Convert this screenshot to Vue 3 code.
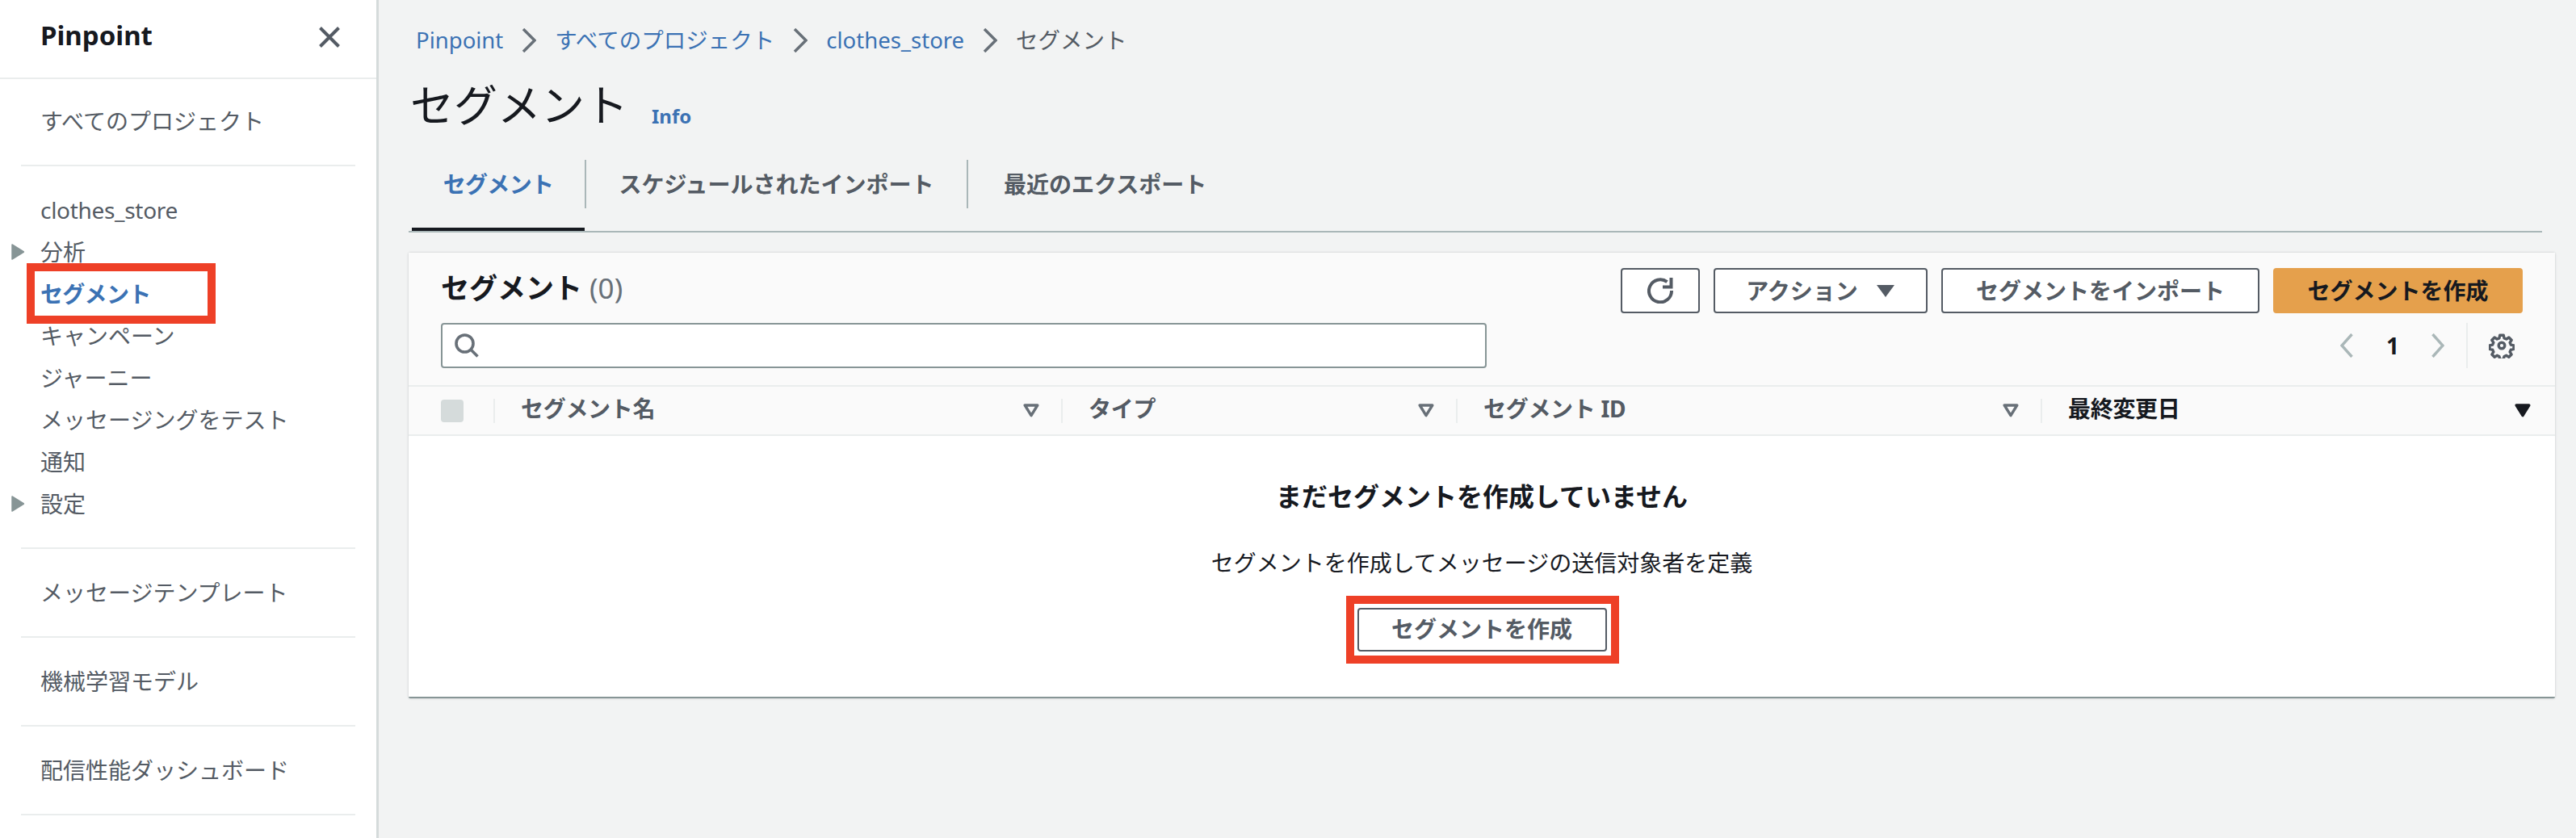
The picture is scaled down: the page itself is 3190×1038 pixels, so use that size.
<script setup>
const topLink = 'すべてのプロジェクト'
const projectRows = [
  { label: 'clothes_store', latin: true },
  { label: '分析', caret: true },
  { label: 'セグメント', active: true },
  { label: 'キャンペーン' },
  { label: 'ジャーニー' },
  { label: 'メッセージングをテスト' },
  { label: '通知' },
  { label: '設定', caret: true },
]
const extraLinks = ['メッセージテンプレート', '機械学習モデル', '配信性能ダッシュボード']
const crumbs = ['Pinpoint', 'すべてのプロジェクト', 'clothes_store']
const tabs = ['セグメント', 'スケジュールされたインポート', '最近のエクスポート']
const columns = [
  { label: 'セグメント名' },
  { label: 'タイプ' },
  { label: 'セグメント ID' },
  { label: '最終変更日', sorted: true },
]
</script>

<template>
  <div class="page">
    <aside class="sidebar">
      <div class="side-head">
        <span class="side-title">Pinpoint</span>
        <svg class="close" width="26" height="26" viewBox="0 0 26 26" fill="none" stroke="#545b64" stroke-width="4">
          <path d="M1.5 1.5 24.5 24.5M24.5 1.5 1.5 24.5" />
        </svg>
      </div>
      <div class="side-section first">
        <div class="nav-row">{{ topLink }}</div>
      </div>
      <div class="side-rule"></div>
      <div class="side-section">
        <div
          v-for="row in projectRows"
          :key="row.label"
          class="nav-row"
          :class="{ active: row.active, 'has-caret': row.caret, latin: row.latin }"
        >
          <svg v-if="row.caret" class="caret" width="16" height="20" viewBox="0 0 16 20">
            <path d="M1 1 15.5 10 1 19Z" fill="#879596" stroke="#879596" stroke-width="1.5" stroke-linejoin="round" />
          </svg>
          {{ row.label }}
          <span v-if="row.active" class="mark mark-nav"></span>
        </div>
      </div>
      <template v-for="link in extraLinks" :key="link">
        <div class="side-rule"></div>
        <div class="side-section">
          <div class="nav-row">{{ link }}</div>
        </div>
      </template>
      <div class="side-rule"></div>
    </aside>

    <main class="main">
      <nav class="crumbs">
        <template v-for="crumb in crumbs" :key="crumb">
          <a class="crumb-link">{{ crumb }}</a>
          <svg class="crumb-sep" width="18" height="30" viewBox="0 0 18 30" fill="none" stroke="#687078" stroke-width="3.5">
            <path d="M2 1 16 15 2 29" />
          </svg>
        </template>
        <span class="crumb-current">セグメント</span>
      </nav>

      <div class="title-row">
        <h1 class="page-title">セグメント</h1>
        <a class="info">Info</a>
      </div>

      <div class="tabs">
        <div v-for="(tab, i) in tabs" :key="tab" class="tab" :class="['tab-' + i, { on: i === 0 }]">
          <span class="tab-text">{{ tab }}</span>
        </div>
      </div>

      <section class="card">
        <header class="card-head">
          <div class="head-row">
            <h2 class="card-title">セグメント <span class="count">(0)</span></h2>
            <div class="actions">
              <button class="btn btn-refresh" aria-label="refresh">
                <svg width="32" height="32" viewBox="0 0 32 32" fill="none" stroke="#545b64" stroke-width="4">
                  <path d="M24.5 5.2A14 14 0 1 0 30 16" />
                  <path d="M29.5 0V11.5H19" />
                </svg>
              </button>
              <button class="btn btn-action">アクション
                <svg class="btn-caret" width="24" height="17" viewBox="0 0 24 17"><path d="M1 1H23L12 16Z" fill="#545b64" /></svg>
              </button>
              <button class="btn btn-import">セグメントをインポート</button>
              <button class="btn btn-primary">セグメントを作成</button>
            </div>
          </div>
          <div class="head-row second">
            <div class="search">
              <svg width="30" height="30" viewBox="0 0 30 30" fill="none" stroke="#687078" stroke-width="3.6">
                <circle cx="12.5" cy="12.5" r="10.5" />
                <path d="M20 20 28.5 28.5" />
              </svg>
            </div>
            <div class="pager">
              <svg width="16" height="30" viewBox="0 0 16 30" fill="none" stroke="#aab7b8" stroke-width="3.4">
                <path d="M14.5 1 2 15 14.5 29" />
              </svg>
              <span class="page-num">1</span>
              <svg width="16" height="30" viewBox="0 0 16 30" fill="none" stroke="#aab7b8" stroke-width="3.4">
                <path d="M1.5 1 14 15 1.5 29" />
              </svg>
              <div class="pager-rule"></div>
              <svg class="gear" width="32" height="32" viewBox="0 0 32 32" fill="none" stroke="#545b64" stroke-width="3.8" stroke-linejoin="round">
                <path d="M13.5 1.8h5l.9 4 3 1.3 3.5-2.2 3.6 3.6-2.2 3.5 1.3 3 4 .9v5l-4 .9-1.3 3 2.2 3.5-3.6 3.6-3.5-2.2-3 1.3-.9 4h-5l-.9-4-3-1.3-3.5 2.2-3.6-3.6 2.2-3.5-1.3-3-4-.9v-5l4-.9 1.3-3-2.2-3.5 3.6-3.6 3.5 2.2 3-1.3z" transform="translate(1.6 1.6) scale(.9)" />
                <circle cx="16" cy="16" r="3.8" stroke-width="3.4" />
              </svg>
            </div>
          </div>
        </header>

        <div class="col-row">
          <div class="col-check"><span class="checkbox"></span></div>
          <div v-for="col in columns" :key="col.label" class="col" :class="{ sorted: col.sorted }">
            <span class="col-text">{{ col.label }}</span>
            <svg width="20" height="17" viewBox="0 0 20 17">
              <path
                d="M2.2 2H17.8L10 14.6Z"
                :fill="col.sorted ? '#16191f' : 'none'"
                :stroke="col.sorted ? '#16191f' : '#687078'"
                stroke-width="3.4"
                stroke-linejoin="round"
              />
            </svg>
          </div>
        </div>

        <div class="empty">
          <div class="empty-title">まだセグメントを作成していません</div>
          <div class="empty-sub">セグメントを作成してメッセージの送信対象者を定義</div>
          <div class="empty-btn-wrap">
            <button class="btn btn-empty">セグメントを作成</button>
            <span class="mark mark-btn"></span>
          </div>
        </div>
      </section>
    </main>
  </div>
</template>

<style>
html, body { margin: 0; background: #f2f3f3; }
</style>

<style scoped>
.page {
  display: flex;
  width: 3190px;
  height: 1038px;
  overflow: hidden;
  background: #f2f3f3;
  font-family: "Noto Sans", "Noto Sans CJK JP", sans-serif;
  font-size: 28px;
  color: #16191f;
}
.sidebar {
  flex: 0 0 466px;
  background: #fff;
  border-right: 3px solid #d5dbdb;
}
.side-head {
  display: flex;
  align-items: center;
  justify-content: space-between;
  height: 96px;
  padding: 0 45px 0 50px;
  border-bottom: 2px solid #eaeded;
}
.side-title { font-size: 33px; font-weight: 700; line-height: 40px; margin-bottom: 8px; }
.close { margin-bottom: 4px; }
.side-section { padding: 28px 0; }
.side-section.first { padding: 26px 0 28px; }
.side-rule { height: 2px; margin: 0 26px; background: #eaeded; }
.nav-row {
  position: relative;
  display: flex;
  align-items: center;
  height: 52px;
  padding-left: 50px;
  color: #545b64;
  line-height: 52px;
  white-space: nowrap;
}
.nav-row.latin { letter-spacing: -0.3px; }
.nav-row.has-caret { padding-left: 14px; }
.nav-row.active { color: #3b72b4; font-weight: 700; letter-spacing: -0.7px; }
.caret { margin-right: 20px; }
.mark { position: absolute; border: 10px solid #ee4027; box-sizing: border-box; }
.mark-nav { left: 33px; width: 234px; top: -12px; height: 75px; }

.main {
  flex: 1;
  min-width: 0;
  padding: 30px 26px 0 36px;
}
.crumbs { display: flex; align-items: center; height: 40px; gap: 23px; padding-left: 10px; white-space: nowrap; font-size: 27.5px; }
.crumb-link { color: #3b72b4; line-height: 40px; }
.crumb-current { color: #545b64; line-height: 40px; }
.title-row { display: flex; align-items: flex-end; height: 60px; margin-top: 30px; padding-left: 3px; }
.page-title { margin: 0; font-size: 54px; font-weight: 400; line-height: 60px; }
.info { margin: 0 0 0 29px; color: #3b72b4; font-size: 24px; font-weight: 700; line-height: 32px; }

.tabs {
  display: flex;
  margin: 22px 16px 0 1px;
  padding: 16px 0 0 4px;
  height: 88px;
  border-bottom: 2px solid #aab7b8;
}
.tab {
  position: relative;
  display: flex;
  align-items: center;
  justify-content: center;
  box-sizing: border-box;
  height: 60px;
  color: #545b64;
  font-weight: 700;
  white-space: nowrap;
  line-height: 60px;
}
.tab-0 { width: 216px; border-right: 2px solid #aab7b8; }
.tab-1 { width: 473px; border-right: 2px solid #aab7b8; }
.tab-2 { padding-left: 44px; }
.tab.on { color: #3b72b4; letter-spacing: -0.7px; }
.tab.on::after {
  content: "";
  position: absolute;
  left: 0;
  right: 0;
  bottom: -28px;
  height: 4px;
  background: #16191f;
}

.card {
  margin-top: 25px;
  margin-left: 1px;
  height: 552px;
  box-sizing: border-box;
  background: #fff;
  border-radius: 2px;
  border-bottom: 2px solid #879596;
  box-shadow: 0 0 3px rgba(0, 28, 36, 0.22);
}
.card-head { padding: 19px 40px 21px 40px; background: #fafafa; }
.head-row { display: flex; align-items: center; justify-content: space-between; height: 56px; }
.head-row.second { margin-top: 12px; }
.card-title { margin: 0 0 6px 0; font-size: 35px; font-weight: 700; line-height: 44px; white-space: nowrap; }
.count { color: #687078; font-weight: 400; }
.actions { display: flex; gap: 17px; }
.btn {
  display: flex;
  align-items: center;
  justify-content: center;
  box-sizing: border-box;
  height: 56px;
  margin: 0;
  padding: 0;
  border: 2px solid #545b64;
  border-radius: 4px;
  background: #fff;
  color: #545b64;
  font: 700 28px/1 "Noto Sans", "Noto Sans CJK JP", sans-serif;
  white-space: nowrap;
}
.btn-refresh { width: 98px; }
.btn-action { width: 265px; }
.btn-caret { margin-left: 22px; }
.btn-import { width: 394px; }
.btn-primary { width: 309px; background: #e5a04c; border-color: #e5a04c; color: #16191f; }
.search {
  display: flex;
  align-items: center;
  box-sizing: border-box;
  width: 1295px;
  height: 56px;
  padding-left: 15px;
  background: #fff;
  border: 2px solid #879596;
  border-radius: 4px;
}
.pager { display: flex; align-items: center; height: 56px; padding-right: 10px; }
.page-num { width: 30px; margin: 0 33px 0 34px; text-align: center; font-weight: 700; line-height: 40px; font-size: 28px; }
.pager-rule { width: 2px; height: 56px; margin: 0 26px 0 27px; background: #eaeded; }
.gear { display: block; }

.col-row {
  display: grid;
  grid-template-columns: 107px 703px 489px 724px 1fr;
  align-items: center;
  box-sizing: border-box;
  height: 63px;
  background: #fafafa;
  border-top: 2px solid #eaeded;
  border-bottom: 2px solid #eaeded;
}
.col-check {
  display: flex;
  align-items: center;
  box-sizing: border-box;
  height: 30px;
  padding-left: 40px;
  border-right: 2px solid #eaeded;
}
.checkbox { width: 28px; height: 28px; background: #d5dbdb; border-radius: 4px; }
.col {
  display: flex;
  align-items: center;
  justify-content: space-between;
  box-sizing: border-box;
  height: 30px;
  padding: 0 27px 0 32px;
  border-right: 2px solid #eaeded;
  color: #545b64;
  font-weight: 700;
  font-size: 28px;
  white-space: nowrap;
}
.col-text { margin-bottom: 7px; letter-spacing: -0.3px; }
.col.sorted { color: #16191f; border-right: 0; padding-right: 30px; }

.empty {
  display: flex;
  flex-direction: column;
  align-items: center;
  padding-top: 55px;
}
.empty-title { font-size: 32px; font-weight: 700; line-height: 40px; }
.empty-sub { margin-top: 42px; line-height: 40px; }
.empty-btn-wrap { position: relative; margin-top: 36px; }
.btn-empty { width: 309px; height: 54px; padding-bottom: 3px; }
.mark-btn { left: -14px; top: -15px; width: 338px; height: 84px; }
</style>
